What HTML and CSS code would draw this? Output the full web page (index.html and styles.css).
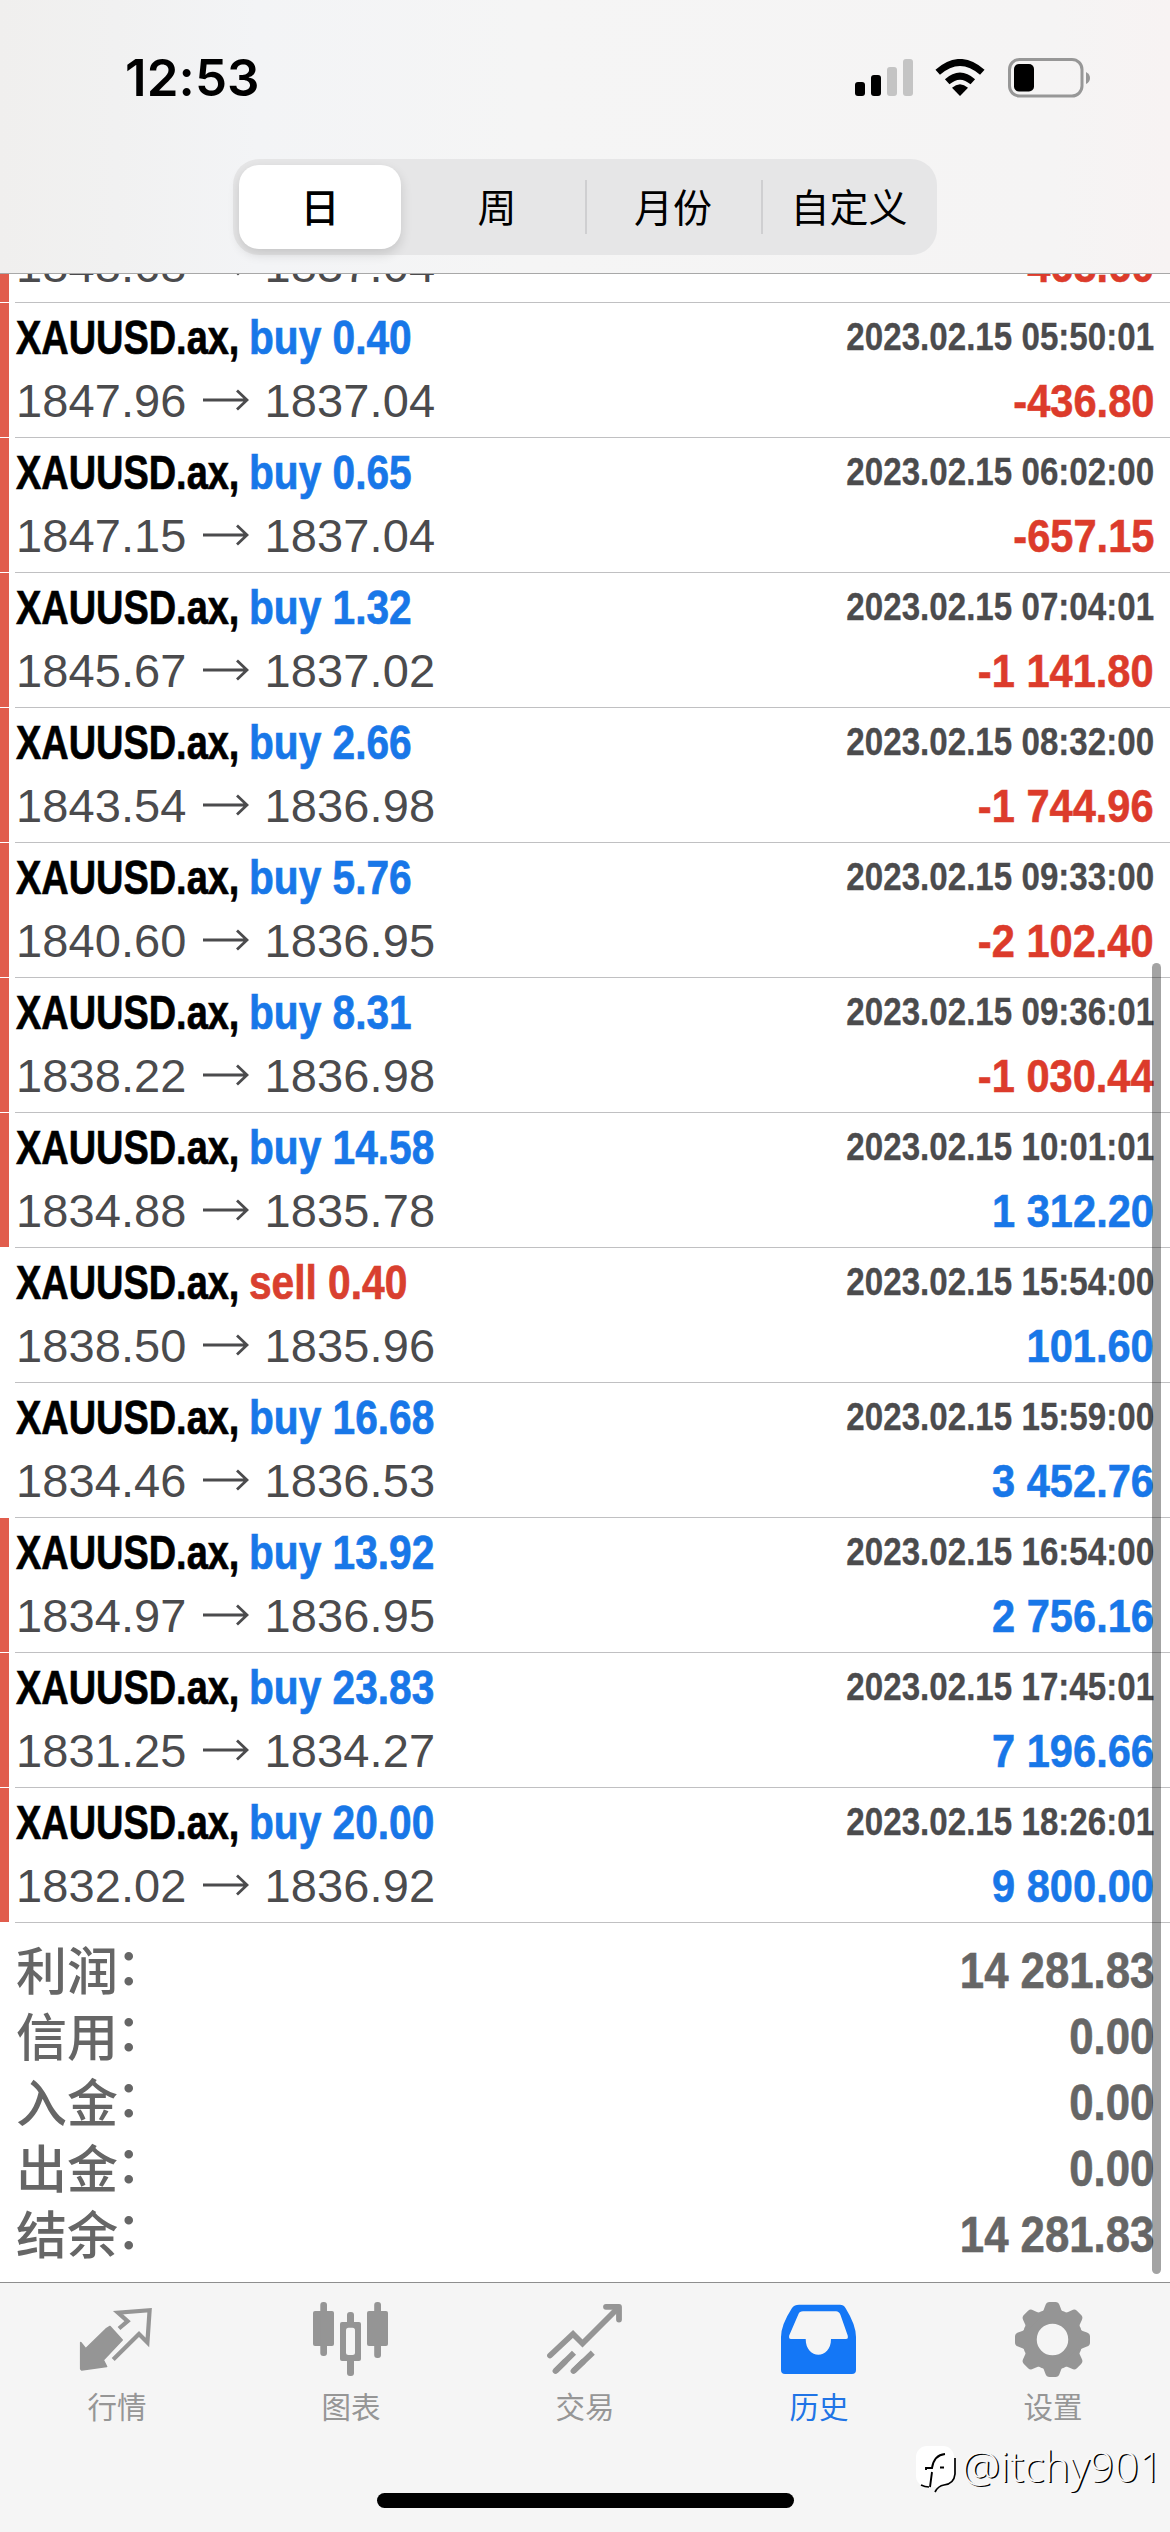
FILE: index.html
```html
<!DOCTYPE html>
<html lang="zh-CN">
<head>
<meta charset="utf-8">
<title>历史</title>
<link rel="stylesheet" href="styles.css">
</head>
<body>
<div class="screen">
  <header class="header">
    <div class="status">
      <span class="time">12:53</span>
      <div class="status-icons">
        <svg class="signal" width="58" height="38" viewBox="0 0 58 38">
          <rect x="0" y="23" width="10" height="14" rx="3"/>
          <rect x="16" y="16" width="10" height="21" rx="3"/>
          <rect x="32" y="8" width="10" height="29" rx="3" fill="#c4c4c4"/>
          <rect x="48" y="0" width="10" height="37" rx="3" fill="#c4c4c4"/>
        </svg>
        <svg class="wifi" width="50" height="38" viewBox="0 0 50 38">
          <path d="M25 37 L17 28.8 Q25 21.8 33 28.8 Z"/>
          <path d="M12.2 22.8 Q25 11.4 37.8 22.8" fill="none" stroke="#000" stroke-width="6.8"/>
          <path d="M2.7 13.3 Q25 -6.4 47.3 13.3" fill="none" stroke="#000" stroke-width="6.8"/>
        </svg>
        <svg class="battery" width="83" height="40" viewBox="0 0 83 40">
          <rect x="1.5" y="1.5" width="72.5" height="36.5" rx="10" fill="none" stroke="#979797" stroke-width="3"/>
          <rect x="6" y="6" width="20" height="27.5" rx="5"/>
          <path d="M78 14 Q82 16 82 20 T78 26 Z" fill="#979797"/>
        </svg>
      </div>
    </div>
    <nav class="segments">
      <span class="seg active">日</span>
      <span class="seg">周</span>
      <span class="seg ruled">月份</span>
      <span class="seg ruled">自定义</span>
    </nav>
  </header>

  <main class="list">
    <div class="row mark"><div class="line"><span class="sym">XAUUSD.ax,</span><span class="op buy">buy 0.40</span><span class="date">2023.02.15 05:36:00</span></div><div class="line prices"><span>1848.68</span><svg class="arrow" viewBox="0 0 46 22"><path d="M0 11H44M34 1.5L44 11L34 20.5"/></svg><span>1837.04</span><span class="amount neg">-465.60</span></div></div>
    <div class="row mark"><div class="line"><span class="sym">XAUUSD.ax,</span><span class="op buy">buy 0.40</span><span class="date">2023.02.15 05:50:01</span></div><div class="line prices"><span>1847.96</span><svg class="arrow" viewBox="0 0 46 22"><path d="M0 11H44M34 1.5L44 11L34 20.5"/></svg><span>1837.04</span><span class="amount neg">-436.80</span></div></div>
    <div class="row mark"><div class="line"><span class="sym">XAUUSD.ax,</span><span class="op buy">buy 0.65</span><span class="date">2023.02.15 06:02:00</span></div><div class="line prices"><span>1847.15</span><svg class="arrow" viewBox="0 0 46 22"><path d="M0 11H44M34 1.5L44 11L34 20.5"/></svg><span>1837.04</span><span class="amount neg">-657.15</span></div></div>
    <div class="row mark"><div class="line"><span class="sym">XAUUSD.ax,</span><span class="op buy">buy 1.32</span><span class="date">2023.02.15 07:04:01</span></div><div class="line prices"><span>1845.67</span><svg class="arrow" viewBox="0 0 46 22"><path d="M0 11H44M34 1.5L44 11L34 20.5"/></svg><span>1837.02</span><span class="amount neg">-1 141.80</span></div></div>
    <div class="row mark"><div class="line"><span class="sym">XAUUSD.ax,</span><span class="op buy">buy 2.66</span><span class="date">2023.02.15 08:32:00</span></div><div class="line prices"><span>1843.54</span><svg class="arrow" viewBox="0 0 46 22"><path d="M0 11H44M34 1.5L44 11L34 20.5"/></svg><span>1836.98</span><span class="amount neg">-1 744.96</span></div></div>
    <div class="row mark"><div class="line"><span class="sym">XAUUSD.ax,</span><span class="op buy">buy 5.76</span><span class="date">2023.02.15 09:33:00</span></div><div class="line prices"><span>1840.60</span><svg class="arrow" viewBox="0 0 46 22"><path d="M0 11H44M34 1.5L44 11L34 20.5"/></svg><span>1836.95</span><span class="amount neg">-2 102.40</span></div></div>
    <div class="row mark"><div class="line"><span class="sym">XAUUSD.ax,</span><span class="op buy">buy 8.31</span><span class="date">2023.02.15 09:36:01</span></div><div class="line prices"><span>1838.22</span><svg class="arrow" viewBox="0 0 46 22"><path d="M0 11H44M34 1.5L44 11L34 20.5"/></svg><span>1836.98</span><span class="amount neg">-1 030.44</span></div></div>
    <div class="row mark"><div class="line"><span class="sym">XAUUSD.ax,</span><span class="op buy">buy 14.58</span><span class="date">2023.02.15 10:01:01</span></div><div class="line prices"><span>1834.88</span><svg class="arrow" viewBox="0 0 46 22"><path d="M0 11H44M34 1.5L44 11L34 20.5"/></svg><span>1835.78</span><span class="amount">1 312.20</span></div></div>
    <div class="row"><div class="line"><span class="sym">XAUUSD.ax,</span><span class="op sell">sell 0.40</span><span class="date">2023.02.15 15:54:00</span></div><div class="line prices"><span>1838.50</span><svg class="arrow" viewBox="0 0 46 22"><path d="M0 11H44M34 1.5L44 11L34 20.5"/></svg><span>1835.96</span><span class="amount">101.60</span></div></div>
    <div class="row"><div class="line"><span class="sym">XAUUSD.ax,</span><span class="op buy">buy 16.68</span><span class="date">2023.02.15 15:59:00</span></div><div class="line prices"><span>1834.46</span><svg class="arrow" viewBox="0 0 46 22"><path d="M0 11H44M34 1.5L44 11L34 20.5"/></svg><span>1836.53</span><span class="amount">3 452.76</span></div></div>
    <div class="row mark"><div class="line"><span class="sym">XAUUSD.ax,</span><span class="op buy">buy 13.92</span><span class="date">2023.02.15 16:54:00</span></div><div class="line prices"><span>1834.97</span><svg class="arrow" viewBox="0 0 46 22"><path d="M0 11H44M34 1.5L44 11L34 20.5"/></svg><span>1836.95</span><span class="amount">2 756.16</span></div></div>
    <div class="row mark"><div class="line"><span class="sym">XAUUSD.ax,</span><span class="op buy">buy 23.83</span><span class="date">2023.02.15 17:45:01</span></div><div class="line prices"><span>1831.25</span><svg class="arrow" viewBox="0 0 46 22"><path d="M0 11H44M34 1.5L44 11L34 20.5"/></svg><span>1834.27</span><span class="amount">7 196.66</span></div></div>
    <div class="row mark"><div class="line"><span class="sym">XAUUSD.ax,</span><span class="op buy">buy 20.00</span><span class="date">2023.02.15 18:26:01</span></div><div class="line prices"><span>1832.02</span><svg class="arrow" viewBox="0 0 46 22"><path d="M0 11H44M34 1.5L44 11L34 20.5"/></svg><span>1836.92</span><span class="amount">9 800.00</span></div></div>
    <div class="totals">
      <div class="total"><span class="label">利润<span class="colon">：</span></span><span class="sum">14 281.83</span></div>
      <div class="total"><span class="label">信用<span class="colon">：</span></span><span class="sum">0.00</span></div>
      <div class="total"><span class="label">入金<span class="colon">：</span></span><span class="sum">0.00</span></div>
      <div class="total"><span class="label">出金<span class="colon">：</span></span><span class="sum">0.00</span></div>
      <div class="total"><span class="label">结余<span class="colon">：</span></span><span class="sum">14 281.83</span></div>
    </div>
    <div class="scrollbar"></div>
  </main>

  <footer class="tabbar">
    <div class="tabs">
      <div class="tab">
        <svg viewBox="0 0 80 80"><path d="M33 26.5L45.2 40L26.3 60L29.6 66.5L4.7 70L3.7 69V42.5L8.7 48.8L29 29Z" fill="#959595" stroke="#959595" stroke-width="1.6" stroke-linejoin="round"/><path d="M42 28.5L50.6 21.2L41 12.6L72.6 10.2L70.4 42.5L62 34L36.2 59.6" fill="none" stroke="#959595" stroke-width="4.2"/></svg>
        <span>行情</span>
      </div>
      <div class="tab">
        <svg viewBox="0 0 80 80" fill="#959595"><rect x="2" y="11" width="21" height="35" rx="2"/><rect x="9.3" y="2" width="6.7" height="54" rx="3"/><rect x="56" y="11" width="21" height="35" rx="2"/><rect x="63.2" y="2" width="6.8" height="56" rx="3"/><rect x="36" y="12" width="7" height="64" rx="3"/><rect x="29" y="22" width="21" height="39" rx="2"/><rect x="35" y="27.7" width="9" height="27.3" rx="2.5" fill="#f5f5f5"/></svg>
        <span>图表</span>
      </div>
      <div class="tab">
        <svg viewBox="0 0 80 80" fill="none" stroke="#959595" stroke-width="5.8"><path d="M5 55.5L28 34L37.5 43.5L72 9" stroke-linecap="round"/><path d="M61 6.8H74V19.6" stroke-linecap="round" stroke-linejoin="round"/><path d="M10.5 71L29 52.7M28.5 71L47.8 52.7"/><path d="M10.5 71L20 61.6M28.5 71L38 61.8" stroke-linecap="round"/></svg>
        <span>交易</span>
      </div>
      <div class="tab current">
        <svg viewBox="0 0 80 80"><path fill="#1477f6" fill-rule="evenodd" d="M20 4.7H61Q64.500 4.700 66.500 8Q77 25 77 37V70Q77 74 73 74H6Q2 74 2 70V37Q2 25 13 8Q15.500 4.700 20 4.700ZM24 11.300Q20.500 11.300 19.500 14L10.200 35.500Q9.500 39 12 39H26.700C26.700 60 52 60 52 39H67Q69.500 39 68.700 35.500L61.500 15Q60 11.300 57 11.300Z"/></svg>
        <span>历史</span>
      </div>
      <div class="tab">
        <svg viewBox="0 0 80 80" fill="#959595">
          <defs><path id="tooth" d="M28 15Q31 10 32.500 5Q33.500 2 36.500 2H42.500Q45.500 2 46.500 5Q48 10 51 15Z"/></defs>
          <circle cx="39.500" cy="39.500" r="23" fill="none" stroke="#959595" stroke-width="14.500"/>
          <use href="#tooth"/><use href="#tooth" transform="rotate(45 39.5 39.5)"/><use href="#tooth" transform="rotate(90 39.5 39.5)"/><use href="#tooth" transform="rotate(135 39.5 39.5)"/><use href="#tooth" transform="rotate(180 39.5 39.5)"/><use href="#tooth" transform="rotate(225 39.5 39.5)"/><use href="#tooth" transform="rotate(270 39.5 39.5)"/><use href="#tooth" transform="rotate(315 39.5 39.5)"/>
        </svg>
        <span>设置</span>
      </div>
    </div>
    <div class="home"></div>
    <div class="watermark">
      <svg width="42" height="50" viewBox="0 0 42 50"><rect x="0" y="0" width="38" height="41" rx="11" fill="#fff"/><path d="M5 39Q9 41 13 41M39 12V28Q38 38 28 39Q22 40 19 46" fill="none" stroke="#000" stroke-width="1.700"/><path d="M14 41L16 26M10 24V22H16Q18 9 29 8M24 21.500H28" fill="none" stroke="#000" stroke-width="1.900"/></svg>
      <span>@itchy901</span>
    </div>
  </footer>
</div>
</body>
</html>
```

FILE: styles.css
```css
* { box-sizing: border-box; }

body {
  margin: 0;
  background: #fff;
  font-family: "Liberation Sans", "Noto Sans CJK SC", sans-serif;
}

.screen {
  display: flex;
  flex-direction: column;
  width: 1170px;
  height: 2532px;
  overflow: hidden;
}

/* Header */
.header {
  flex: none;
  height: 274px;
  border-bottom: 1px solid #a8a8a8;
  background: linear-gradient(90deg, #f0efee 0, #f1f1f1 10%, #f3f4f6 22%, #f5f5f5 45%, #f5f4f4 90%, #f7f3f3 100%);
}

.status {
  display: flex;
  justify-content: space-between;
  align-items: flex-start;
  height: 159px;
  padding: 58px 79px 0 125px;
}

.time {
  font: 600 51px/40px Inter, sans-serif;
  letter-spacing: 0.1px;
}

.status-icons { display: flex; }
.signal { margin-top: 1px; }
.wifi { margin: 1px 23px 0 22px; }

.segments {
  display: flex;
  width: 704px;
  height: 96px;
  margin: 0 auto;
  padding: 6px 0 6px 6px;
  border-radius: 26px;
  background: #e6e6e7;
}

.seg {
  display: flex;
  flex: none;
  align-items: center;
  justify-content: center;
  width: 176px;
  padding-bottom: 5px;
  font: 400 39px/78px "Noto Sans CJK SC", sans-serif;
}

.seg.active {
  width: 162px;
  margin-right: 8px;
  border-radius: 20px;
  background: #fff;
  box-shadow: 0 5px 12px rgba(0, 0, 0, 0.14);
  font-weight: 500;
}

.seg.ruled {
  background: linear-gradient(#cfcfd1, #cfcfd1) 0 50% / 2px 54px no-repeat;
}

/* Deals */
.list {
  position: relative;
  display: flex;
  flex: none;
  flex-direction: column;
  justify-content: flex-end;
  height: 2008px;
  overflow: hidden;
}

.row {
  position: relative;
  flex: none;
  height: 135px;
  padding: 7px 16px 0;
  background: linear-gradient(#c0c0c2, #c0c0c2) 15px 100% / 100% 1px no-repeat;
}

.row.mark::before {
  content: "";
  position: absolute;
  left: 0;
  top: 0;
  width: 9px;
  height: 134px;
  background: #e15d4d;
}

.line {
  display: flex;
  align-items: center;
  height: 54px;
  white-space: nowrap;
}

.prices {
  height: 72px;
  color: #4b4b4d;
  font-size: 47px;
  letter-spacing: 0.1px;
}

.sym, .op {
  flex: none;
  font-size: 48px;
  font-weight: 700;
  transform-origin: left;
  -webkit-text-stroke: 0.7px currentColor;
}

.sym { width: 233px; transform: scaleX(0.79); }
.op { transform: scaleX(0.847); }
.buy { color: #1877e8; }
.sell { color: #d9402f; }

.date {
  margin-left: auto;
  color: #4b4b4d;
  font-size: 39px;
  font-weight: 700;
  transform: scaleX(0.85);
  transform-origin: right;
  -webkit-text-stroke: 0.3px currentColor;
}

.arrow {
  width: 46px;
  height: 22px;
  margin: 0 16px 0 16px;
  fill: none;
  stroke: #4b4b4d;
  stroke-width: 2.8;
}

.amount {
  margin-left: auto;
  color: #1877e8;
  font-weight: 700;
  letter-spacing: 0;
  transform: scaleX(0.885);
  transform-origin: right;
  -webkit-text-stroke: 0.6px currentColor;
}

.amount.neg { color: #dc3b2b; }

/* Totals */
.totals {
  flex: none;
  height: 359px;
  padding: 15px 16px 0;
}

.total {
  display: flex;
  align-items: center;
  justify-content: space-between;
  height: 66px;
  color: #666;
}

.label {
  padding-bottom: 6px;
  font: 500 51px/60px "Noto Sans CJK SC", sans-serif;
}

.colon {
  display: inline-block;
  transform: translate(-2px, -5px);
}

.sum {
  font: 700 50px/66px "Liberation Sans", sans-serif;
  transform: scaleX(0.875);
  transform-origin: right;
  -webkit-text-stroke: 0.6px currentColor;
}

.scrollbar {
  position: absolute;
  top: 689px;
  right: 9px;
  width: 9px;
  height: 1311px;
  border-radius: 5px;
  background: rgba(0, 0, 0, 0.36);
}

/* Tab bar */
.tabbar {
  position: relative;
  flex: none;
  height: 250px;
  border-top: 1px solid #8e8e8e;
  background: #f5f5f5;
}

.tabs { display: flex; padding-top: 17px; }

.tab {
  display: flex;
  flex: 1;
  flex-direction: column;
  align-items: center;
  color: #969696;
  font: 400 29.5px/40px "Noto Sans CJK SC", sans-serif;
}

.tab svg { width: 80px; height: 80px; margin-bottom: 5px; }
.tab.current { color: #2074e6; }

.home {
  width: 417px;
  height: 15px;
  margin: 68px auto 0;
  border-radius: 8px;
  background: #000;
}

.watermark {
  position: absolute;
  right: 7px;
  top: 163px;
  display: flex;
  align-items: flex-start;
  gap: 4px;
  color: #f8f8f8;
  font: 300 43px/40px "Open Sans", sans-serif;
  text-shadow: 1.5px 1px 0 #000;
}
```
